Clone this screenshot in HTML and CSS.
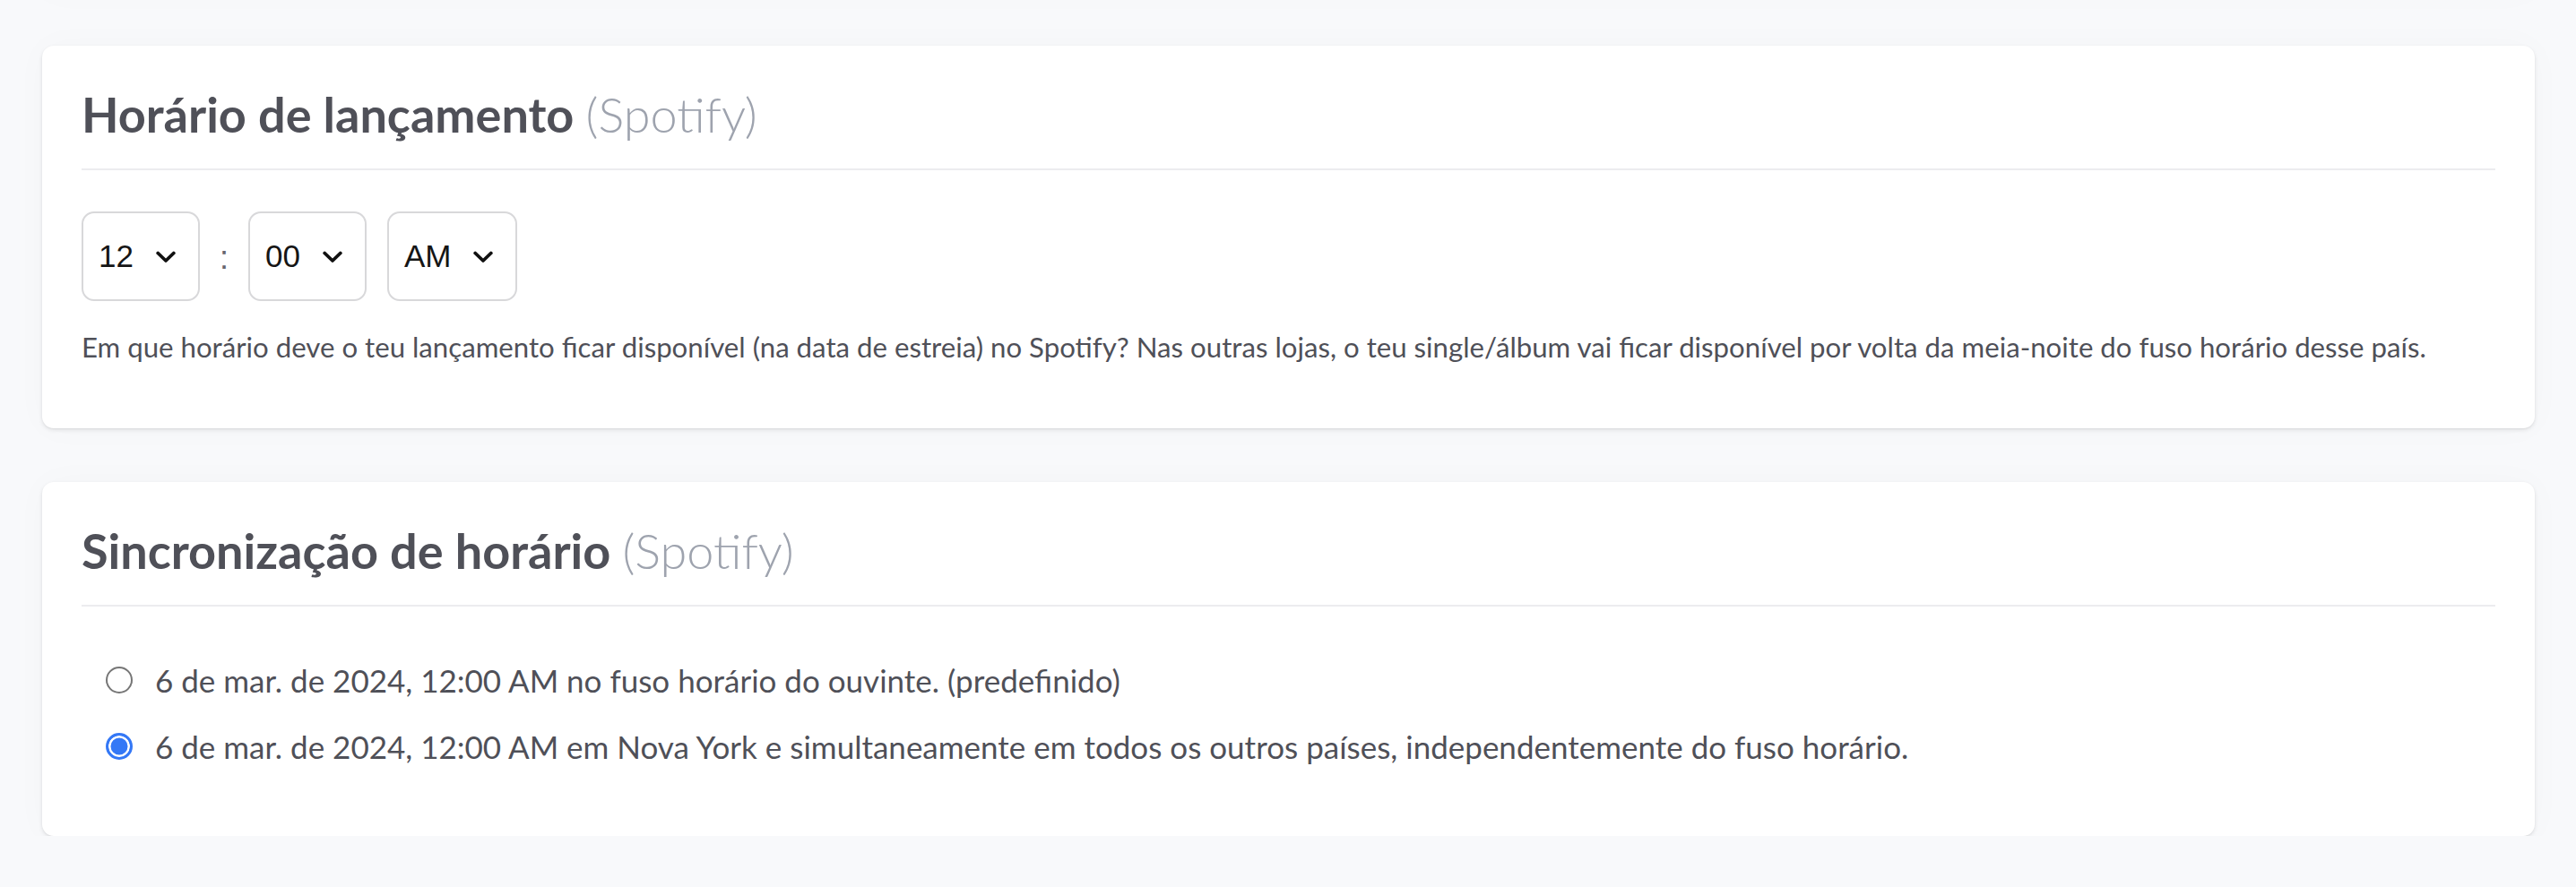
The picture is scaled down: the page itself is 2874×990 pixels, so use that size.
FILE: index.html
```html
<!DOCTYPE html>
<html lang="pt">
<head>
<meta charset="utf-8">
<title>Lançamento</title>
<link rel="stylesheet" href="styles.css">
</head>
<body>
<div class="page">
  <section class="card ghost"></section>

  <section class="card">
    <h2 class="card-title">Horário de lançamento <span class="muted">(Spotify)</span></h2>
    <div class="card-body release">
      <div class="time-row">
        <div class="select"><span>12</span><svg class="chev" viewBox="0 0 22 14" width="22" height="14"><path d="M2.2 2.5 L11 11 L19.8 2.5" fill="none" stroke="#111" stroke-width="3.8" stroke-linecap="round" stroke-linejoin="round"/></svg></div>
        <span class="colon">:</span>
        <div class="select"><span>00</span><svg class="chev" viewBox="0 0 22 14" width="22" height="14"><path d="M2.2 2.5 L11 11 L19.8 2.5" fill="none" stroke="#111" stroke-width="3.8" stroke-linecap="round" stroke-linejoin="round"/></svg></div>
        <div class="select"><span>AM</span><svg class="chev" viewBox="0 0 22 14" width="22" height="14"><path d="M2.2 2.5 L11 11 L19.8 2.5" fill="none" stroke="#111" stroke-width="3.8" stroke-linecap="round" stroke-linejoin="round"/></svg></div>
      </div>
      <p class="help">Em que horário deve o teu lançamento ficar disponível (na data de estreia) no Spotify? Nas outras lojas, o teu single/álbum vai ficar disponível por volta da meia-noite do fuso horário desse país.</p>
    </div>
  </section>

  <section class="card">
    <h2 class="card-title">Sincronização de horário <span class="muted">(Spotify)</span></h2>
    <div class="card-body sync">
      <label class="option"><input type="radio" name="sync" class="radio"><span>6 de mar. de 2024, 12:00 AM no fuso horário do ouvinte. (predefinido)</span></label>
      <label class="option"><input type="radio" name="sync" class="radio" checked><span>6 de mar. de 2024, 12:00 AM em Nova York e simultaneamente em todos os outros países, independentemente do fuso horário.</span></label>
    </div>
  </section>
</div>
</body>
</html>
```

FILE: styles.css
```css
* { box-sizing: border-box; }

html, body {
  margin: 0;
  padding: 0;
  background: #f8f9fb;
  overflow: hidden;
}

body {
  font-family: "Lato", "Noto Sans", sans-serif;
  color: #4f5058;
}

.page {
  display: flex;
  flex-direction: column;
  gap: 60px;
  padding: 0 46px 0 47px;
}

.card {
  background: #fff;
  border-radius: 13px;
  padding: 44px 44px 0;
  box-shadow: 0 2px 5px rgba(0, 0, 0, 0.09), 0 1px 2px rgba(0, 0, 0, 0.05), 0 0 40px rgba(0, 0, 0, 0.025);
}

.ghost {
  height: 100px;
  margin-top: -109px;
}

.card-title {
  margin: 0;
  font-size: 54px;
  line-height: 66px;
  font-weight: 700;
  color: #4f5058;
  padding-bottom: 27px;
  border-bottom: 2px solid #ececef;
}

.muted {
  font-weight: 300;
  color: #9ea3ae;
}

.release {
  padding: 46px 0 73px;
}

.time-row {
  display: flex;
  align-items: center;
}

.select {
  display: flex;
  align-items: center;
  gap: 25px;
  height: 100px;
  padding: 0 25px 0 17px;
  border: 2px solid #d8d8da;
  border-radius: 14px;
  font-family: "Liberation Sans", Arial, sans-serif;
  font-size: 35px;
  color: #151515;
}

.select + .select {
  margin-left: 23px;
}

.chev {
  display: block;
  margin-top: 2px;
}

.colon {
  font-family: "Liberation Sans", Arial, sans-serif;
  font-size: 36px;
  color: #66666d;
  padding: 0 22px;
  margin-top: 4px;
}

.help {
  margin: 34px 0 0;
  font-size: 31.2px;
  line-height: 35px;
  color: #4f5058;
}

.sync {
  display: flex;
  flex-direction: column;
  gap: 24px;
  padding: 57px 0 75px;
}

.option {
  display: flex;
  align-items: center;
  gap: 25px;
  height: 50px;
  padding-left: 27px;
  font-size: 35px;
  color: #4f5058;
}

.radio {
  appearance: none;
  -webkit-appearance: none;
  margin: 0;
  width: 30px;
  height: 30px;
  flex: 0 0 30px;
  border-radius: 50%;
  border: 2.5px solid #767676;
  background: #fff;
}

.radio:checked {
  border: 3px solid #3478f6;
  background: #3478f6;
  box-shadow: inset 0 0 0 2.5px #fff;
}
```
